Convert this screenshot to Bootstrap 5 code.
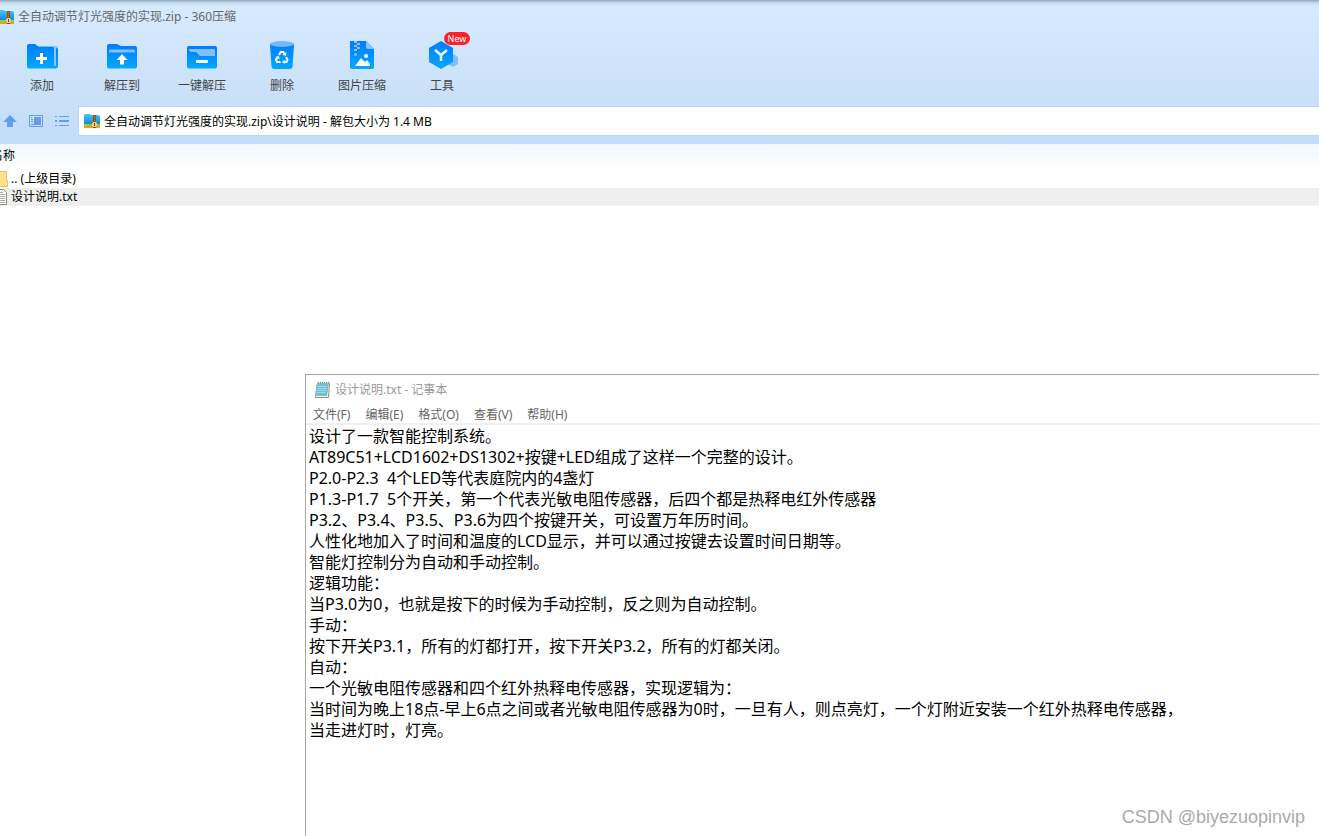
<!DOCTYPE html>
<html lang="zh-CN">
<head>
<meta charset="utf-8">
<meta name="viewport" content="width=device-width, initial-scale=1">
<title>全自动调节灯光强度的实现.zip - 360压缩</title>
<link href="https://cdn.jsdelivr.net/npm/bootstrap@5.3.0/dist/css/bootstrap.min.css" rel="stylesheet">
<style>
  body { font-family: "Noto Sans", "Noto Sans CJK SC", sans-serif; font-size: 12px; line-height: 18px; color: #000; background: #fff; }
  .archive-head { background: linear-gradient(#8fa5bd 0, #a5b9cd 1px, #c9dff2 3px, #d6eafe 7px, #d4e8fd 30px, #c8dff8 106px, #c1ddf9 136px); }
  .title-line { height: 32px; padding-top: 2px; color: #666; }
  .tools { padding-left: 2px; }
  .tool { width: 80px; height: 68px; color: #444; font-size: 12px; line-height: 18px; }
  .tool svg { width: 36px; height: 36px; }
  .tool-name { margin-top: 5px; }
  .tool-new { top: 0; left: 42px; width: 26px; height: 13px; font-size: 9px; line-height: 13px; background: #fa202d; }
  .path-row { height: 44px; padding-top: 7px; }
  .nav-icons { width: 79px; height: 28px; }
  .nav-icons button { width: 26px; }
  .path-box { height: 28px; padding-left: 5px; box-shadow: 0 0 0 1px #b9d6f3; }
  .path-box input, .path-box input:focus { color: #000; font-size: 12px; line-height: 18px; padding: 2px 0 0; outline: 0; }
  .file-list { margin-left: -9px; width: calc(100% + 9px); font-size: 12px; line-height: 18px; }
  .file-list th { height: 26px; padding: 0 0 2px; background: linear-gradient(#f1f8ff, #fff); }
  .file-list td { height: 18px; }
  .file-list svg { margin-right: 2px; }
  .picked { background: #efefef; }
  .notepad { left: 305px; top: 374px; border: 1px solid #a6a6a6; border-width: 1px 0 0 1px; }
  .note-title { height: 30px; color: #999; padding-left: 8px; }
  .note-menu { height: 20px; padding-left: 7px; gap: 15px; border-bottom: 2px solid #f0f0f0; }
  .note-item { font-size: 12px; line-height: 20px; color: #666; }
  .note-text { font-size: 16px; line-height: 21px; color: #000; padding: 1px 3px; resize: none; white-space: pre; outline: 0; overflow: hidden; }
  .watermark { right: 14px; bottom: 8px; font: 18px/22px "Liberation Sans", sans-serif; color: #aaa; text-shadow: 1px 1px 0 #fff; }
</style>
</head>
<body class="vh-100 overflow-hidden position-relative">
<svg class="position-absolute" width="0" height="0" aria-hidden="true">
  <defs>
    <linearGradient id="blue" x2="0" y2="1"><stop stop-color="#007cff"/><stop offset="1" stop-color="#02a8fe"/></linearGradient>
    <linearGradient id="cyan" x2="0" y2="1"><stop stop-color="#42c8f5"/><stop offset="1" stop-color="#1789dd"/></linearGradient>
    <symbol id="zip" viewBox="0 0 16 14">
      <path fill="url(#cyan)" d="M0 1.500Q0 0 1.500 0h4l1.500 1H14q2 0 2 2v7H0z"/>
      <path fill="#8bd13d" d="M0 10h16v2H0z"/><path fill="#ff9418" d="M0 12h16v1q0 1-1 1H1q-1 0-1-1z"/>
      <path fill="#9a4e13" d="M9 1h3v13H9z"/><path stroke="#c98336" stroke-dasharray="1 1" d="M10.500 2v6"/>
      <path fill="#f3cf8a" d="M9 8h3v1h1v3h-1v1H9v-1H8V9h1z"/><path fill="#804113" d="M10 9h1v3h-1z"/>
    </symbol>
  </defs>
</svg>

<main>
  <header class="archive-head">
    <div class="title-line d-flex align-items-center gap-1"><svg width="14" height="14" viewBox="2 0 14 14"><use href="#zip" width="16" height="14"/></svg><span>全自动调节灯光强度的实现.zip - 360压缩</span></div>
    <nav class="tools d-flex" aria-label="工具栏">
      <button class="tool btn p-0 border-0 rounded-0 d-flex flex-column align-items-center">
        <svg class="mt-1" viewBox="0 0 36 36"><path fill="#79bafd" d="M6 10h25q3 0 3 3v16q0 3-3 3H6z"/><path fill="url(#blue)" d="M3 10q0-2 2-2h6l4 3h14q3 0 3 3v18.500H5q-2 0-2-2z"/><path fill="url(#blue)" d="M32 12q2 0 2 2v16q0 2.500-3 2.500V31q1 0 1-1z"/><path fill="#8cc4ff" d="M29 10h1q2 0 2 2v18h-2V13q0-2-1-3z"/><path fill="#fff" d="M16 17h3v4h4v3h-4v4h-3v-4h-4v-3h4z"/></svg>
        <span class="tool-name">添加</span></button>
      <button class="tool btn p-0 border-0 rounded-0 d-flex flex-column align-items-center">
        <svg class="mt-1" viewBox="0 0 36 36"><path fill="url(#blue)" d="M3 10q0-2 2-2h8l4 2h14q2 0 2 2v18.500q0 2-2 2H5q-2 0-2-2z"/><path fill="#82bffd" d="M5 15q0-1.500 1.500-1.500h23q1.500 0 1.500 1.500v1.500H5z"/><path fill="#fff" d="m18 18 5.500 6H20v4.500h-4V24h-3.500z"/></svg>
        <span class="tool-name">解压到</span></button>
      <button class="tool btn p-0 border-0 rounded-0 d-flex flex-column align-items-center">
        <svg class="mt-1" viewBox="0 0 36 36"><rect x="3" y="10" width="30" height="22.500" rx="2" fill="url(#blue)"/><path fill="#82bffd" d="M5 13h25q1 0 1 1v6H17q-2 0-3-2l-2-2H7q-2 0-2-3z"/><rect x="12" y="24" width="12" height="3" rx="1" fill="#fff"/></svg>
        <span class="tool-name">一键解压</span></button>
      <button class="tool btn p-0 border-0 rounded-0 d-flex flex-column align-items-center">
        <svg class="mt-1" viewBox="0 0 36 36"><path fill="url(#blue)" d="M6 8h24l-1.500 23q-.2 2-3 2h-15q-2.800 0-3-2z"/><ellipse cx="18" cy="8" rx="12" ry="3" fill="#76b7ff"/><g fill="none" stroke="#fff" stroke-width="2"><path d="m15 19 1.700-3h2.600l1.700 3M22 21l1.500 2.500-1 2.500h-3M16.500 26H13l-1-2.500 1.500-2.500"/></g><path fill="#fff" d="m22.500 16-.5 4-3.500-1.500zM20.500 23.500V28L18 26zM11.500 21l3.500-1 .5 3.500z"/></svg>
        <span class="tool-name">删除</span></button>
      <button class="tool btn p-0 border-0 rounded-0 d-flex flex-column align-items-center">
        <svg class="mt-1" viewBox="0 0 36 36"><path fill="url(#blue)" d="M6 5h16l8 8v18q0 2-2 2H8q-2 0-2-2z"/><path fill="#8bc3ff" d="M22 5v6q0 2 2 2h6z"/><path fill="#8bc3ff" d="M10 5h3v2h-3zM13 7h3v2h-3zM10 9h3v2h-3zM13 11h3v2h-3zM10 13h3v2h-3z"/><circle cx="11.500" cy="18.500" r="1.500" fill="#8bc3ff"/><circle cx="22" cy="20" r="2" fill="#fff"/><path fill="#fff" d="m11 30 6-8 4 4 2-2 3 4v2z"/></svg>
        <span class="tool-name">图片压缩</span></button>
      <button class="tool btn p-0 border-0 rounded-0 d-flex flex-column align-items-center position-relative">
        <svg class="mt-1" viewBox="0 0 36 36"><path fill="#80bdfb" d="m29 18 5 3v7l-5 3-6-3v-7z"/><path fill="url(#blue)" d="m17 5 12 7v14l-12 7-12-7V12z"/><path fill="none" stroke="#e7f8ff" stroke-width="2.500" d="m11 14 6 5 6-5M17 19v6"/></svg>
        <span class="tool-name">工具</span><span class="tool-new position-absolute rounded-pill text-white">New</span></button>
    </nav>
    <div class="path-row d-flex">
      <div class="nav-icons d-flex flex-shrink-0">
        <button class="btn p-0 border-0 d-flex align-items-center" aria-label="上一级"><svg width="20" height="16" viewBox="0 0 20 16"><path fill="#659cec" d="m10 2 7 7h-4v5H7V9H3z"/></svg></button>
        <button class="btn p-0 border-0 d-flex align-items-center" aria-label="预览"><svg width="20" height="16" viewBox="0 0 20 16"><path fill="none" stroke="#659cec" d="M3.500 2.500h13v11h-13z"/><path fill="#659cec" d="M5 4h1v1H5zM5 6h2v1H5zM5 8h2v1H5zM8 4h7v7H8zM5 11h10v1H5z"/></svg></button>
        <button class="btn p-0 border-0 d-flex align-items-center" aria-label="列表"><svg width="20" height="16" viewBox="0 0 20 16"><path fill="#659cec" d="M3 3h2v1H3zM3 7h2v2H3zM3 12h2v1H3zM7 3h10v1H7zM7 7h10v2H7zM7 12h10v1H7z"/></svg></button>
      </div>
      <div class="path-box bg-white d-flex align-items-center flex-grow-1">
        <svg width="16" height="14" class="flex-shrink-0"><use href="#zip"/></svg>
        <input class="border-0 bg-transparent flex-grow-1 ms-1" aria-label="路径" value="全自动调节灯光强度的实现.zip\设计说明 - 解包大小为 1.4 MB">
      </div>
    </div>
  </header>

  <table class="file-list">
    <thead><tr><th class="fw-normal" scope="col">名称</th></tr></thead>
    <tbody>
      <tr><td class="p-0"><div class="d-flex align-items-center"><svg width="18" height="18"><path fill="#ffe28b" stroke="#eac45b" d="M1.500 1.500h14v9h1v6h-15z"/></svg>.. (上级目录)</div></td></tr>
      <tr class="picked"><td class="p-0"><div class="d-flex align-items-center"><svg width="18" height="18"><path fill="#fff" stroke="#888" d="M3.500 1.500h9l3 3v12h-12z"/><path stroke="#aaa" d="M5 4.500h7M5 6.500h9M5 8.500h9M5 10.500h9M5 12.500h9M5 14.500h9"/></svg>设计说明.txt</div></td></tr>
    </tbody>
  </table>
</main>

<section class="notepad position-absolute end-0 bottom-0 bg-white d-flex flex-column" aria-label="记事本">
  <div class="note-title d-flex align-items-center gap-1">
    <svg width="17" height="18" viewBox="0 0 17 18"><path fill="#fff" stroke="#9b8b6c" d="M3.500 2.500h12l-1 14H1.500z"/><path fill="#73bfd6" d="M3 2h12l-2 13H1z"/><path stroke="#a0d8e6" d="M4 5.500h9M4 7.500h9M3 9.500h9M3 11.500h9"/><path stroke="#777" stroke-dasharray="1 1" d="M4 1.500h11"/></svg>
    <span>设计说明.txt - 记事本</span>
  </div>
  <nav class="note-menu d-flex" aria-label="菜单">
    <button class="btn p-0 border-0 note-item">文件(F)</button><button class="btn p-0 border-0 note-item">编辑(E)</button><button class="btn p-0 border-0 note-item">格式(O)</button><button class="btn p-0 border-0 note-item">查看(V)</button><button class="btn p-0 border-0 note-item">帮助(H)</button>
  </nav>
  <textarea class="note-text border-0 flex-grow-1 w-100" spellcheck="false" aria-label="文本">设计了一款智能控制系统。
AT89C51+LCD1602+DS1302+按键+LED组成了这样一个完整的设计。
P2.0-P2.3  4个LED等代表庭院内的4盏灯
P1.3-P1.7  5个开关，第一个代表光敏电阻传感器，后四个都是热释电红外传感器
P3.2、P3.4、P3.5、P3.6为四个按键开关，可设置万年历时间。
人性化地加入了时间和温度的LCD显示，并可以通过按键去设置时间日期等。
智能灯控制分为自动和手动控制。
逻辑功能：
当P3.0为0，也就是按下的时候为手动控制，反之则为自动控制。
手动：
按下开关P3.1，所有的灯都打开，按下开关P3.2，所有的灯都关闭。
自动：
一个光敏电阻传感器和四个红外热释电传感器，实现逻辑为：
当时间为晚上18点-早上6点之间或者光敏电阻传感器为0时，一旦有人，则点亮灯，一个灯附近安装一个红外热释电传感器，
当走进灯时，灯亮。</textarea>
</section>
<div class="watermark position-absolute">CSDN @biyezuopinvip</div>
<script src="https://cdn.jsdelivr.net/npm/bootstrap@5.3.0/dist/js/bootstrap.bundle.min.js"></script>
</body>
</html>
